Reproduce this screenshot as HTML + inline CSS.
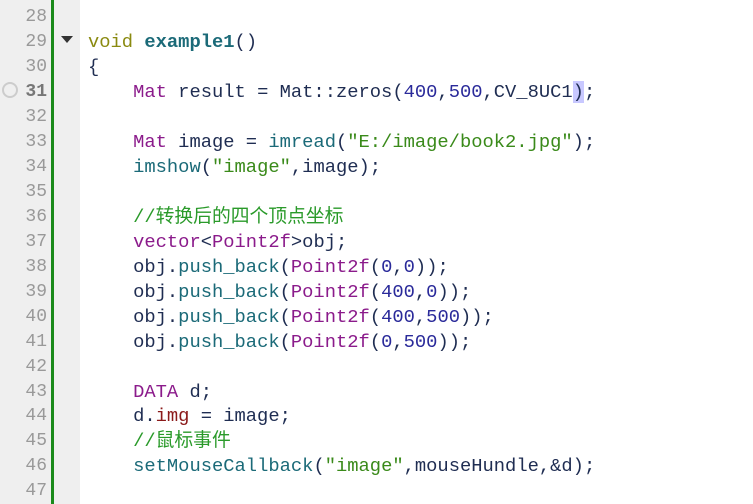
<!DOCTYPE html>
<html><head><meta charset="utf-8"><style>
body{margin:0;width:753px;height:504px;background:#fff;overflow:hidden;position:relative;font-family:"Liberation Mono","Noto Sans CJK SC",monospace;}
.gut{position:absolute;left:0;top:0;width:80px;height:504px;background:#efefef;}
.bar{position:absolute;left:51px;top:0;width:3px;height:504px;background:#1a8a1a;}
.ln{position:absolute;left:0;width:47px;text-align:right;font-size:18px;color:#999;line-height:25px;}
.c{position:absolute;left:88px;font-size:18.8px;line-height:25px;white-space:pre;color:#1f2d52;}
.k{color:#8a8a10}.f{color:#1b6a78;font-weight:bold}.t{color:#8b1b8b}.n{color:#2a2a9a}.s{color:#3a8a1a}.m{color:#2a9a2a}.p{color:#1b6a78}.r{color:#8b1a1a}
</style></head><body>
<div class="gut"></div><div class="bar"></div>
<svg style="position:absolute;left:60px;top:35px" width="14" height="10"><path d="M1 1 L13 1 L7 8Z" fill="#333"/></svg>
<svg style="position:absolute;left:1px;top:81px" width="18" height="18"><circle cx="9" cy="9" r="7" fill="none" stroke="#ccc" stroke-width="2"/></svg>
<div class="ln" style="top:5px">28</div>
<div class="ln" style="top:30px">29</div>
<div class="ln" style="top:55px">30</div>
<div class="ln" style="top:80px;color:#777;font-weight:bold">31</div>
<div class="ln" style="top:105px">32</div>
<div class="ln" style="top:130px">33</div>
<div class="ln" style="top:155px">34</div>
<div class="ln" style="top:180px">35</div>
<div class="ln" style="top:205px">36</div>
<div class="ln" style="top:230px">37</div>
<div class="ln" style="top:255px">38</div>
<div class="ln" style="top:280px">39</div>
<div class="ln" style="top:305px">40</div>
<div class="ln" style="top:330px">41</div>
<div class="ln" style="top:355px">42</div>
<div class="ln" style="top:380px">43</div>
<div class="ln" style="top:404px">44</div>
<div class="ln" style="top:429px">45</div>
<div class="ln" style="top:454px">46</div>
<div class="ln" style="top:479px">47</div>
<div class="c" style="top:30px"><span class="k">void</span> <span class="f">example1</span>()</div>
<div class="c" style="top:55px">{</div>
<div class="c" style="top:80px">    <span class="t">Mat</span> result = Mat::zeros(<span class="n">400</span>,<span class="n">500</span>,CV_8UC1<span style="background:#c8c8ff">)</span>;</div>
<div class="c" style="top:130px">    <span class="t">Mat</span> image = <span class="p">imread</span>(<span class="s">"E:/image/book2.jpg"</span>);</div>
<div class="c" style="top:155px">    <span class="p">imshow</span>(<span class="s">"image"</span>,image);</div>
<div class="c m" style="top:205px">    //转换后的四个顶点坐标</div>
<div class="c" style="top:230px">    <span class="t">vector</span>&lt;<span class="t">Point2f</span>&gt;obj;</div>
<div class="c" style="top:255px">    obj.<span class="p">push_back</span>(<span class="t">Point2f</span>(<span class="n">0</span>,<span class="n">0</span>));</div>
<div class="c" style="top:280px">    obj.<span class="p">push_back</span>(<span class="t">Point2f</span>(<span class="n">400</span>,<span class="n">0</span>));</div>
<div class="c" style="top:305px">    obj.<span class="p">push_back</span>(<span class="t">Point2f</span>(<span class="n">400</span>,<span class="n">500</span>));</div>
<div class="c" style="top:330px">    obj.<span class="p">push_back</span>(<span class="t">Point2f</span>(<span class="n">0</span>,<span class="n">500</span>));</div>
<div class="c" style="top:380px">    <span class="t">DATA</span> d;</div>
<div class="c" style="top:404px">    d.<span class="r">img</span> = image;</div>
<div class="c m" style="top:429px">    //鼠标事件</div>
<div class="c" style="top:454px">    <span class="p">setMouseCallback</span>(<span class="s">"image"</span>,mouseHundle,&amp;d);</div>
</body></html>
